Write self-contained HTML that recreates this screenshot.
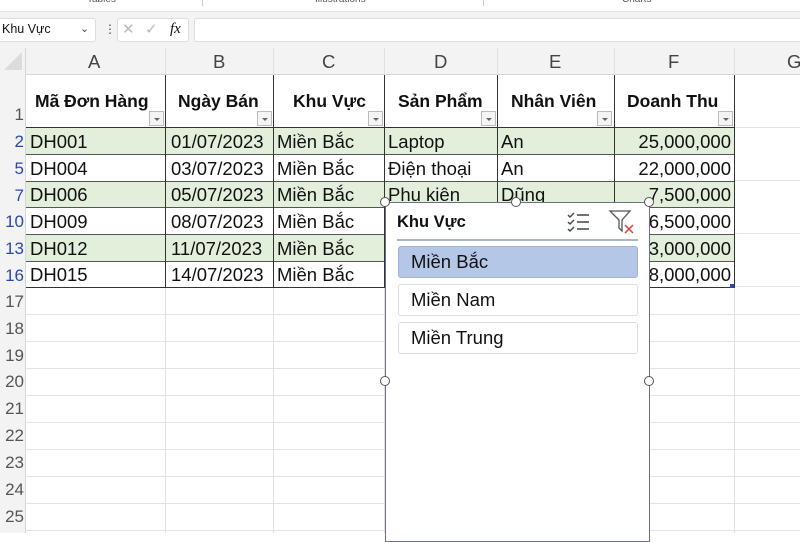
<!DOCTYPE html>
<html><head><meta charset="utf-8"><style>
*{margin:0;padding:0;box-sizing:border-box}
body{width:800px;height:533px;overflow:hidden;background:#fff;font-family:"Liberation Sans","DejaVu Sans",sans-serif;position:relative;color:#111}
.a{position:absolute}
.t{position:absolute;font-size:18.5px;white-space:nowrap;line-height:27px}
.b{font-weight:bold;font-size:17.5px}
.rn{position:absolute;left:0;width:24px;text-align:right;font-size:17px;line-height:27px;color:#555;overflow:visible;white-space:nowrap}
.blue{color:#2a48b0}
.dd{position:absolute;width:15px;height:15px;border:1px solid #bbb;background:#f4f4f4}
.dd:after{content:"";position:absolute;left:4px;top:6px;border-left:3px solid transparent;border-right:3px solid transparent;border-top:3px solid #666}
.hd{position:absolute;border-radius:50%;width:10px;height:10px;border:1.5px solid #555;background:#fff}
.it{position:absolute;left:12px;width:240px;height:32px;border:1px solid #ddd;border-radius:3px;font-size:18.5px;line-height:30px;padding-left:12px;background:#fff}
.rl{position:absolute;top:-6px;font-size:10px;line-height:12px;color:#555}
</style></head><body>
<!-- ribbon -->
<div class="a" style="left:0;top:0;width:800px;height:12px;background:#fff;border-bottom:1px solid #e6e6e6"></div>
<div class="rl" style="left:87px">Tables</div>
<div class="rl" style="left:315px">Illustrations</div>
<div class="rl" style="left:622px">Charts</div>
<div class="a" style="left:202px;top:0;width:1px;height:6px;background:#ccc"></div>
<div class="a" style="left:483px;top:0;width:1px;height:6px;background:#ccc"></div>
<div class="a" style="left:0;top:12px;width:800px;height:36px;background:#f3f3f3"></div>
<div class="a" style="left:-4px;top:18px;width:100px;height:24px;background:#fff;border:1px solid #ddd;border-radius:3px"></div>
<div class="t" style="left:2px;top:16px;font-size:12.5px">Khu Vực</div>
<div class="t" style="left:80px;top:16px;font-size:11px;color:#444">⌄</div>
<div class="t" style="left:104px;top:16px;font-size:12px;color:#444">⋮</div>
<div class="a" style="left:117px;top:18px;width:72px;height:24px;background:#fff;border:1px solid #ddd;border-radius:3px"></div>
<div class="t" style="left:122px;top:16px;font-size:15px;color:#bbb">✕</div>
<div class="t" style="left:145px;top:16px;font-size:15px;color:#bbb">✓</div>
<div class="t" style="left:170px;top:16px;font-size:15px;font-style:italic;font-family:'Liberation Serif',serif">fx</div>
<div class="a" style="left:194px;top:18px;width:620px;height:24px;background:#fff;border:1px solid #ddd;border-radius:3px"></div>
<!-- column header -->
<div class="a" style="left:0;top:48px;width:800px;height:27px;background:#f3f3f3;border-bottom:1px solid #d6d6d6"></div>
<div class="a" style="left:0;top:48px;width:26px;height:485px;background:#f3f3f3;border-right:1px solid #d6d6d6"></div>
<div class="a" style="left:4px;top:52px;width:0;height:0;border-left:18px solid transparent;border-bottom:18px solid #dcdcdc"></div>
<div class="t" style="left:88px;top:48px;color:#444">A</div>
<div class="t" style="left:213px;top:48px;color:#444">B</div>
<div class="t" style="left:322px;top:48px;color:#444">C</div>
<div class="t" style="left:434px;top:48px;color:#444">D</div>
<div class="t" style="left:549px;top:48px;color:#444">E</div>
<div class="t" style="left:668px;top:48px;color:#444">F</div>
<div class="t" style="left:787px;top:48px;color:#444">G</div>
<!-- gridlines -->
<div class="a" style="left:165px;top:48px;width:1px;height:485px;background:#e0e0e0"></div>
<div class="a" style="left:273px;top:48px;width:1px;height:485px;background:#e0e0e0"></div>
<div class="a" style="left:384px;top:48px;width:1px;height:485px;background:#e0e0e0"></div>
<div class="a" style="left:497px;top:48px;width:1px;height:485px;background:#e0e0e0"></div>
<div class="a" style="left:614px;top:48px;width:1px;height:485px;background:#e0e0e0"></div>
<div class="a" style="left:734px;top:48px;width:1px;height:485px;background:#e0e0e0"></div>
<div class="a" style="left:26px;top:288px;width:774px;height:245px;background:repeating-linear-gradient(to bottom,transparent 0 26px,#e3e3e3 26px 27px)"></div>
<div class="a" style="left:734px;top:75px;width:66px;height:213px;background:repeating-linear-gradient(to bottom,transparent 0 52px,#e3e3e3 52px 53px)"></div>
<!-- table bands -->
<div class="a" style="left:26px;top:128px;width:708px;height:27px;background:#e2efda"></div>
<div class="a" style="left:26px;top:182px;width:708px;height:26px;background:#e2efda"></div>
<div class="a" style="left:26px;top:235px;width:708px;height:27px;background:#e2efda"></div>
<div class="a" style="left:26px;top:75px;width:709px;height:213px;border-right:1px solid #333;border-bottom:1px solid #333;background:linear-gradient(#333,#333) 0 52px/100% 1px no-repeat,linear-gradient(#555,#555) 0 79px/100% 1px no-repeat,linear-gradient(#555,#555) 0 106px/100% 1px no-repeat,linear-gradient(#555,#555) 0 132px/100% 1px no-repeat,linear-gradient(#555,#555) 0 159px/100% 1px no-repeat,linear-gradient(#555,#555) 0 186px/100% 1px no-repeat"></div>
<div class="a" style="left:165px;top:75px;width:1px;height:213px;background:#333"></div>
<div class="a" style="left:273px;top:75px;width:1px;height:213px;background:#333"></div>
<div class="a" style="left:384px;top:75px;width:1px;height:213px;background:#333"></div>
<div class="a" style="left:497px;top:75px;width:1px;height:213px;background:#333"></div>
<div class="a" style="left:614px;top:75px;width:1px;height:213px;background:#333"></div>
<div class="a" style="left:730px;top:284px;width:4px;height:4px;background:#2a48b0"></div>
<!-- headers -->
<div class="t b" style="left:35px;top:88px">Mã Đơn Hàng</div>
<div class="t b" style="left:178px;top:88px">Ngày Bán</div>
<div class="t b" style="left:293px;top:88px">Khu Vực</div>
<div class="t b" style="left:398px;top:88px">Sản Phẩm</div>
<div class="t b" style="left:511px;top:88px">Nhân Viên</div>
<div class="t b" style="left:627px;top:88px">Doanh Thu</div>
<div class="dd" style="left:149px;top:111px"></div>
<div class="dd" style="left:257px;top:111px"></div>
<div class="dd" style="left:368px;top:111px"></div>
<div class="dd" style="left:481px;top:111px"></div>
<div class="dd" style="left:597px;top:111px"></div>
<div class="dd" style="left:718px;top:111px"></div>
<!-- row numbers -->
<div class="rn" style="top:101px">1</div>
<div class="rn blue" style="top:128px">2</div>
<div class="rn blue" style="top:155px">5</div>
<div class="rn blue" style="top:182px">7</div>
<div class="rn blue" style="top:208px">10</div>
<div class="rn blue" style="top:235px">13</div>
<div class="rn blue" style="top:262px">16</div>
<div class="rn" style="top:288px">17</div>
<div class="rn" style="top:315px">18</div>
<div class="rn" style="top:342px">19</div>
<div class="rn" style="top:368px">20</div>
<div class="rn" style="top:395px">21</div>
<div class="rn" style="top:422px">22</div>
<div class="rn" style="top:449px">23</div>
<div class="rn" style="top:476px">24</div>
<div class="rn" style="top:503px">25</div>
<!-- data -->
<div class="t" style="left:30px;top:128px">DH001</div><div class="t" style="left:171px;top:128px">01/07/2023</div><div class="t" style="left:277px;top:128px">Miền Bắc</div><div class="t" style="left:388px;top:128px">Laptop</div><div class="t" style="left:501px;top:128px">An</div><div class="t" style="left:614px;top:128px;width:117px;text-align:right">25,000,000</div>
<div class="t" style="left:30px;top:155px">DH004</div><div class="t" style="left:171px;top:155px">03/07/2023</div><div class="t" style="left:277px;top:155px">Miền Bắc</div><div class="t" style="left:388px;top:155px">Điện thoại</div><div class="t" style="left:501px;top:155px">An</div><div class="t" style="left:614px;top:155px;width:117px;text-align:right">22,000,000</div>
<div class="t" style="left:30px;top:181px">DH006</div><div class="t" style="left:171px;top:181px">05/07/2023</div><div class="t" style="left:277px;top:181px">Miền Bắc</div><div class="t" style="left:388px;top:181px">Phụ kiện</div><div class="t" style="left:501px;top:181px">Dũng</div><div class="t" style="left:614px;top:181px;width:117px;text-align:right">7,500,000</div>
<div class="t" style="left:30px;top:208px">DH009</div><div class="t" style="left:171px;top:208px">08/07/2023</div><div class="t" style="left:277px;top:208px">Miền Bắc</div><div class="t" style="left:614px;top:208px;width:117px;text-align:right">6,500,000</div>
<div class="t" style="left:30px;top:235px">DH012</div><div class="t" style="left:171px;top:235px">11/07/2023</div><div class="t" style="left:277px;top:235px">Miền Bắc</div><div class="t" style="left:614px;top:235px;width:117px;text-align:right">3,000,000</div>
<div class="t" style="left:30px;top:261px">DH015</div><div class="t" style="left:171px;top:261px">14/07/2023</div><div class="t" style="left:277px;top:261px">Miền Bắc</div><div class="t" style="left:614px;top:261px;width:117px;text-align:right">8,000,000</div>
<!-- slicer -->
<div class="a" style="left:385px;top:202px;width:265px;height:340px;background:#fff;border:1.5px solid #6a7385">
  <div class="t b" style="left:11px;top:6px;font-size:16.5px">Khu Vực</div>
  <svg class="a" style="left:180px;top:7px" width="26" height="24" viewBox="0 0 26 24" fill="none" stroke="#444" stroke-width="1.4"><path d="M2 5l2 2 4-4M2 12l2 2 4-4M2 19l2 2 4-4M11 5h12M11 12h12M11 19h12"/></svg>
  <svg class="a" style="left:222px;top:5px" width="28" height="28" viewBox="0 0 28 28" fill="none"><path d="M2 3h20l-8 9v11l-3-3v-8z" stroke="#555" stroke-width="1.3"/><path d="M17 17l8 8M25 17l-8 8" stroke="#d83b3b" stroke-width="1.5"/></svg>
  <div class="a" style="left:11px;top:36px;width:241px;height:1.5px;background:#a9b4c4"></div>
  <div class="it" style="top:43px;background:#b4c7e7;border-color:#9fb3d5">Miền Bắc</div>
  <div class="it" style="top:81px">Miền Nam</div>
  <div class="it" style="top:119px">Miền Trung</div>
</div>
<div class="hd" style="left:380px;top:197px"></div>
<div class="hd" style="left:511px;top:197px"></div>
<div class="hd" style="left:644px;top:197px"></div>
<div class="hd" style="left:380px;top:376px"></div>
<div class="hd" style="left:644px;top:376px"></div>
</body></html>
